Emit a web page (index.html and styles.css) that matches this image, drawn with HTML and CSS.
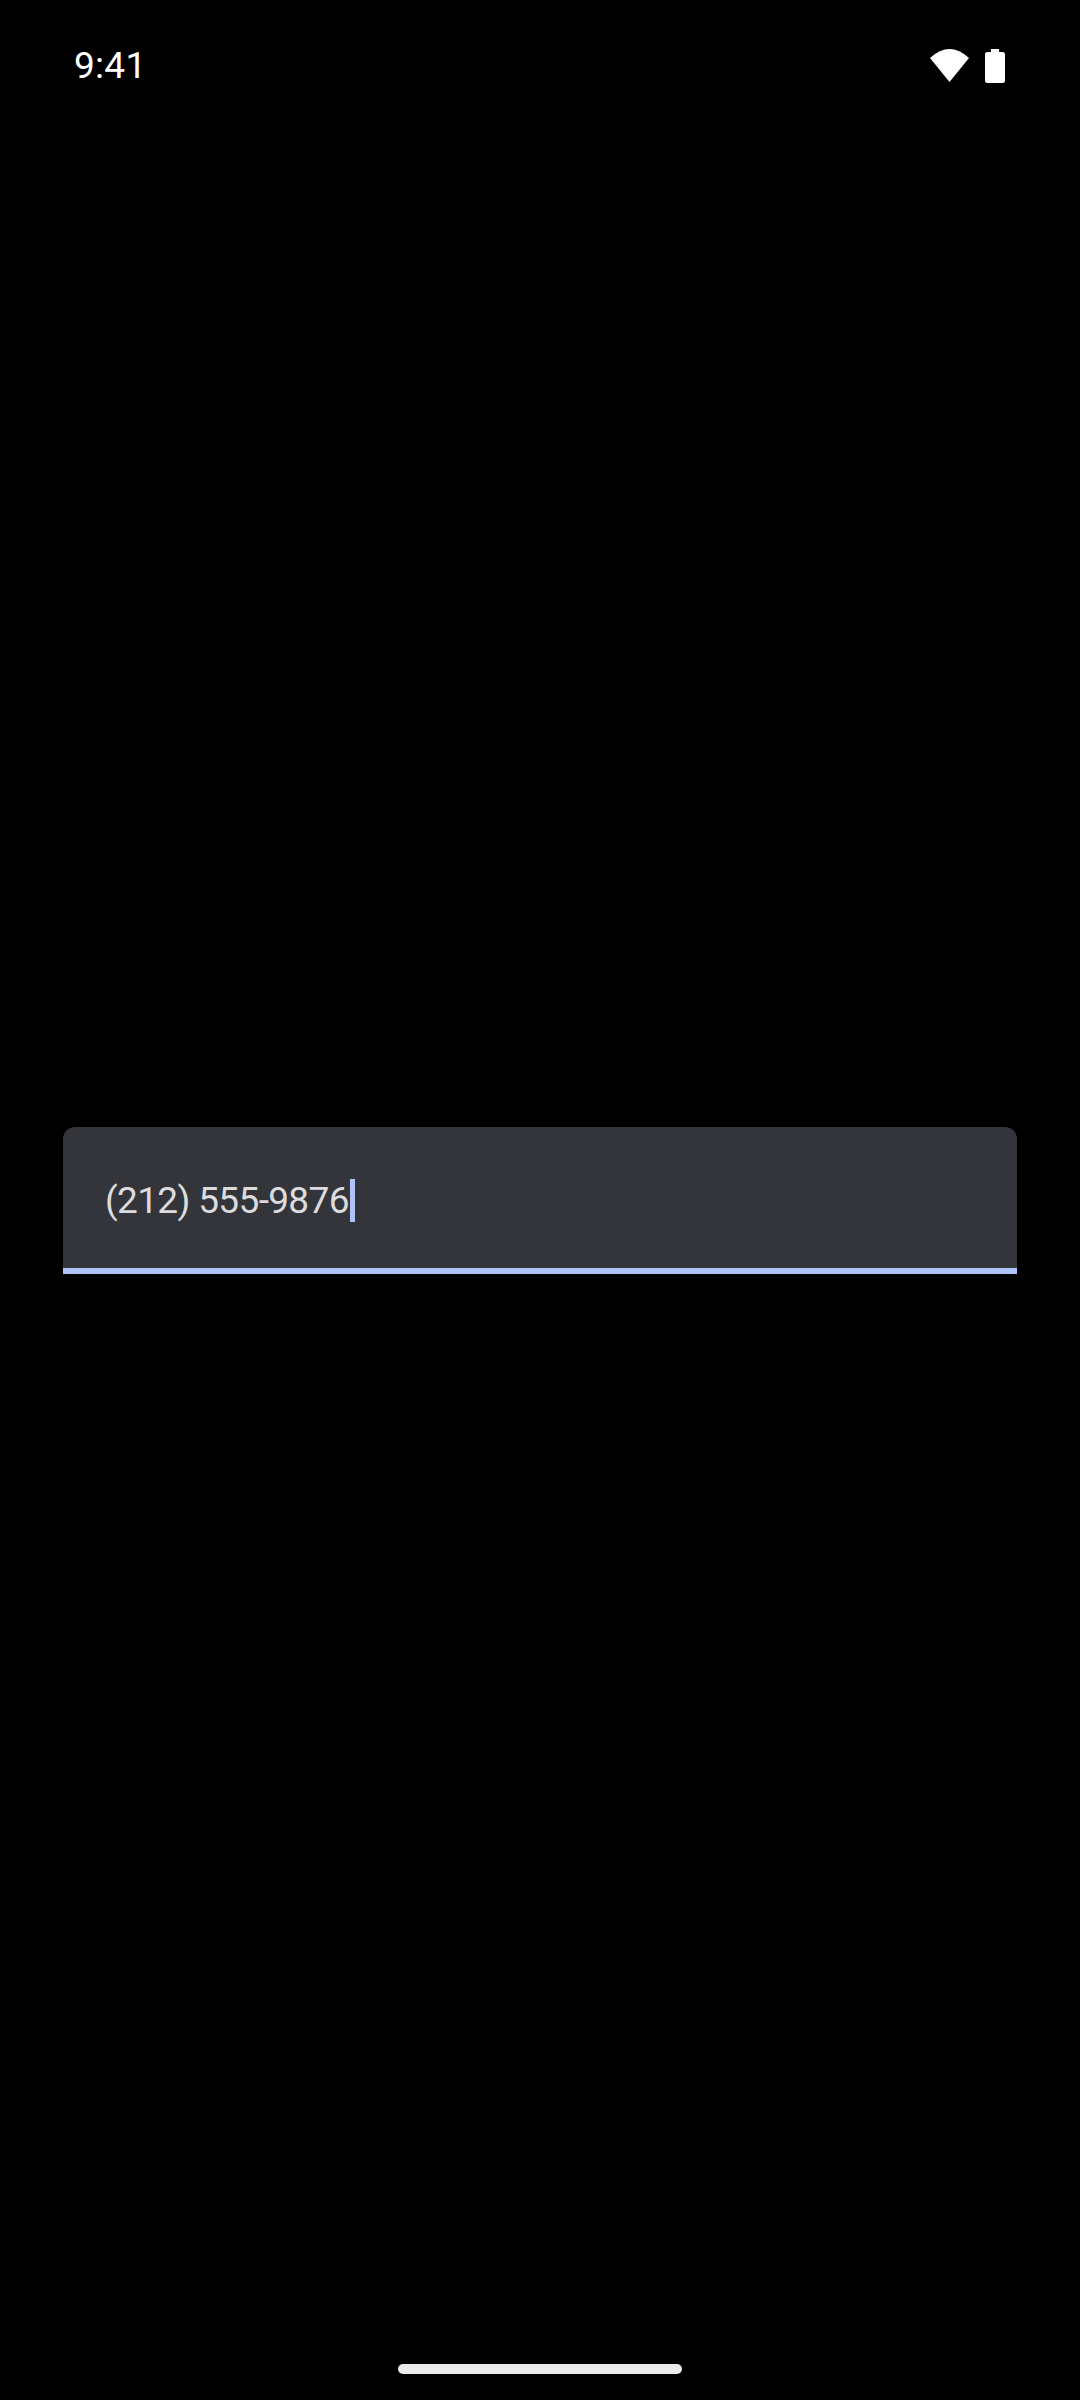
FILE: index.html
```html
<!DOCTYPE html>
<html lang="en">
<head>
<meta charset="utf-8">
<title>Phone number field</title>
<link rel="stylesheet" href="styles.css">
</head>
<body>
<div class="screen">
  <header class="status-bar">
    <span class="clock">9:41</span>
    <div class="status-icons">
      <svg class="wifi" viewBox="0 0 39 33" aria-hidden="true"><path d="M0 9Q19.500 -9 39 9L19.500 33Z" fill="#fff"/></svg>
      <svg class="battery" viewBox="0 0 20 34" aria-hidden="true"><path d="M6 0h8v3h3.500A2.500 2.500 0 0 1 20 5.500v26a2.500 2.500 0 0 1-2.500 2.500h-15A2.500 2.500 0 0 1 0 31.500v-26A2.500 2.500 0 0 1 2.500 3H6Z" fill="#fff"/></svg>
    </div>
  </header>
  <main class="content">
    <div class="field">
      <span class="field-value">(212) 555-9876</span><span class="caret"></span>
    </div>
  </main>
  <footer class="gesture-area"><div class="home-pill"></div></footer>
</div>
</body>
</html>
```
FILE: styles.css
```css
* { box-sizing: border-box; }
html, body { margin: 0; height: 100%; background: #000; }
.screen {
  width: 1080px;
  height: 2400px;
  display: flex;
  flex-direction: column;
  background: #000;
  font-family: Roboto, "Liberation Sans", sans-serif;
}
.status-bar {
  height: 132px;
  flex: none;
  display: flex;
  justify-content: space-between;
  align-items: flex-start;
  padding: 45px 75px 0 74px;
}
.clock {
  color: #fff;
  font-size: 37px;
  line-height: 42px;
  letter-spacing: 0.3px;
}
.status-icons {
  display: flex;
  align-items: flex-start;
  gap: 16px;
  padding-top: 4px;
}
.wifi { width: 39px; height: 33px; display: block; }
.battery { width: 20px; height: 34px; display: block; }
.content {
  flex: 1;
  padding: 995px 63px 0;
}
.field {
  height: 147px;
  display: flex;
  align-items: center;
  padding: 6px 43px 0 42px;
  background: #33353a;
  border-bottom: 6px solid #aec3f8;
  border-radius: 12px 12px 0 0;
}
.field-value {
  color: #dcdcdf;
  font-size: 37px;
  line-height: 44px;
  letter-spacing: -0.65px;
}
.caret {
  width: 5px;
  height: 43px;
  margin-left: 1px;
  background: #aec3f8;
}
.gesture-area {
  height: 132px;
  flex: none;
  display: flex;
  justify-content: center;
  padding-top: 96px;
}
.home-pill {
  width: 284px;
  height: 10px;
  border-radius: 5px;
  background: #ebebeb;
}
```
